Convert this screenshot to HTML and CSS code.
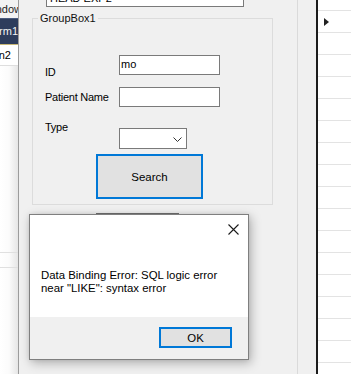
FILE: index.html
```
<!DOCTYPE html>
<html lang="en">
<head>
    <meta charset="UTF-8">
    <title>Data Binding Error</title>
    <link rel="stylesheet" href="styles.css">
</head>
<body>
    <div class="desk">
        <div class="backwin">
            <div class="bw-title"><span>Window</span></div>
            <div class="bw-tab"><span>Form1</span></div>
            <div class="bw-item"><span>Screen2</span></div>
            <div class="bw-list">
                <div class="bw-line"></div>
                <div class="bw-line"></div>
            </div>
        </div>

        <div class="mainwin">
            <div class="panel">
                <div class="topbox">HEAD EXP2</div>

                <fieldset class="group">
                    <legend>GroupBox1</legend>
                    <div class="row row-id">
                        <label class="lbl">ID</label>
                        <div class="txt">mo</div>
                    </div>
                    <div class="row row-name">
                        <label class="lbl">Patient Name</label>
                        <div class="txt"></div>
                    </div>
                    <div class="row row-type">
                        <label class="lbl">Type</label>
                        <div class="combo">
                            <svg width="9" height="5" viewBox="0 0 9 5">
                                <polyline points="0.5,0.5 4.5,4.5 8.5,0.5" fill="none" stroke="#333" stroke-width="1" />
                            </svg>
                        </div>
                    </div>
                    <button class="btn btn-focus search">Search</button>
                </fieldset>

                <button class="btn under"></button>
            </div>
            <div class="gutter"></div>
            <div class="grid">
                <div class="grid-head"></div>
                <div class="grid-row current"><span class="arrow"></span></div>
                <div class="grid-row"></div>
                <div class="grid-row"></div>
                <div class="grid-row"></div>
                <div class="grid-row"></div>
                <div class="grid-row"></div>
                <div class="grid-row"></div>
                <div class="grid-row"></div>
                <div class="grid-row"></div>
                <div class="grid-row"></div>
                <div class="grid-row"></div>
                <div class="grid-row"></div>
                <div class="grid-row"></div>
                <div class="grid-row"></div>
                <div class="grid-row"></div>
                <div class="grid-row"></div>
                <div class="grid-row"></div>
            </div>
        </div>

        <div class="dlg">
            <div class="dlg-body">
                <div class="dlg-top">
                    <svg class="dlg-close" width="11" height="11" viewBox="0 0 11 11">
                        <path d="M0.5 0.5 L10.5 10.5 M10.5 0.5 L0.5 10.5" stroke="#1a1a1a" stroke-width="1.1" />
                    </svg>
                </div>
                <p class="dlg-msg">Data Binding Error: SQL logic error<br>near "LIKE": syntax error</p>
            </div>
            <div class="dlg-foot">
                <button class="btn btn-focus ok">OK</button>
            </div>
        </div>
    </div>
</body>
</html>
```

FILE: styles.css
```
body {
    margin: 0;
    width: 351px;
    height: 374px;
    overflow: hidden;
    background: #fff;
    font-family: "Liberation Sans", Arial, sans-serif;
    font-size: 11px;
    color: #000;
}

.desk {
    position: relative;
    display: flex;
    height: 374px;
}

/* window behind, only its right edge shows */
.backwin {
    width: 18px;
    flex: none;
    display: flex;
    flex-direction: column;
    font-size: 11px;
    line-height: 15px;
}

.bw-title,
.bw-tab,
.bw-item {
    display: flex;
    justify-content: flex-end;
    align-items: center;
    overflow: hidden;
    white-space: nowrap;
}

.bw-title {
    height: 18px;
    background: #f3f3f3;
    color: #1e1e1e;
}

.bw-title span {
    margin-right: -4px;
}

.bw-tab {
    height: 25px;
    background: #2e3d5c;
    border-top: 1px solid #4a5b7e;
    border-bottom: 1px solid #c9b877;
    color: #f4f4f4;
}

.bw-item {
    height: 20px;
    padding-right: 7px;
    background: #fff;
    border-bottom: 1px solid #dedede;
}

.bw-list {
    flex: 1;
    padding-top: 186px;
    background: linear-gradient(to right, #ffffff 0, #fbfbfb 9px, #e6e6e6 18px);
}

.bw-line {
    height: 14px;
    border-top: 1px solid #e0e0e0;
}

/* main form */
.mainwin {
    flex: 1;
    display: flex;
    border-left: 1px solid #9c9c9c;
    background: #f0f0f0;
}

.panel {
    width: 278px;
    flex: none;
    border-right: 1px solid #dadada;
    display: flex;
    flex-direction: column;
    align-items: flex-start;
}

.topbox {
    margin: -11px 0 0 27px;
    width: 190px;
    height: 16px;
    padding: 0 3px;
    line-height: 16px;
    background: #fff;
    border: 1px solid #7a7a7a;
}

.group {
    margin: 4px 0 0 13px;
    padding: 30px 0 5px 0;
    width: 239px;
    border: 1px solid #dcdcdc;
    min-width: 0;
}

.group legend {
    margin-left: 5px;
    padding: 0 2px;
    line-height: 14px;
    color: #111;
}

.row {
    display: flex;
    align-items: flex-start;
    padding-left: 12px;
    height: 20px;
}

.lbl {
    width: 74px;
    flex: none;
    line-height: 14px;
    letter-spacing: -0.25px;
    white-space: nowrap;
}

.row-id .lbl {
    margin-top: 10px;
}

.row-name {
    margin-top: 12px;
}

.row-name .lbl {
    margin-top: 3px;
}

.row-type {
    margin-top: 13px;
    height: 29px;
}

.txt {
    width: 97px;
    height: 18px;
    padding: 0 1px 0 1px;
    background: #fff;
    border: 1px solid #7a7a7a;
    line-height: 17px;
}

.combo {
    margin-top: 8px;
    width: 66px;
    height: 19px;
    background: #fff;
    border: 1px solid #7a7a7a;
    display: flex;
    justify-content: flex-end;
    align-items: center;
}

.combo svg {
    margin-right: 4px;
    margin-top: 1px;
}

.btn {
    font-family: inherit;
    font-size: 11px;
    color: #000;
    background: #e1e1e1;
    border: 1px solid #adadad;
    padding: 0;
}

.btn-focus {
    border: 2px solid #0078d7;
}

.search {
    display: block;
    margin: 5px 0 0 63px;
    width: 107px;
    height: 45px;
    font-size: 11.5px;
}

.under {
    margin: 8px 0 0 77px;
    width: 83px;
    height: 23px;
    border-color: #707070;
}

.gutter {
    width: 18px;
    flex: none;
}

/* data grid */
.grid {
    flex: 1;
    background: #fff;
    border-left: 2px solid #1c1c1c;
}

.grid-head {
    height: 10px;
    border-bottom: 1px solid #e3e3e3;
}

.grid-row {
    height: 21px;
    border-bottom: 1px solid #e3e3e3;
    display: flex;
    align-items: center;
}

.arrow {
    margin-left: 6px;
    width: 0;
    height: 0;
    border-top: 4px solid transparent;
    border-bottom: 4px solid transparent;
    border-left: 5px solid #222;
}

/* message box */
.dlg {
    position: absolute;
    left: 29px;
    top: 214px;
    width: 218px;
    border: 1px solid #7f7f7f;
    background: #fff;
    box-shadow: 2px 3px 10px rgba(0, 0, 0, 0.28), 0 0 4px rgba(0, 0, 0, 0.08);
    font-size: 11.4px;
}

.dlg-body {
    height: 102px;
}

.dlg-top {
    display: flex;
    justify-content: flex-end;
    padding: 9px 9px 0 0;
}

.dlg-close {
    display: block;
}

.dlg-msg {
    margin: 34px 0 0 11px;
    line-height: 13px;
    color: #000;
}

.dlg-foot {
    height: 42px;
    background: #f0f0f0;
    display: flex;
    justify-content: flex-end;
    align-items: flex-start;
}

.ok {
    margin: 10px 16px 0 0;
    width: 73px;
    height: 21px;
    font-size: 11.4px;
}
```
